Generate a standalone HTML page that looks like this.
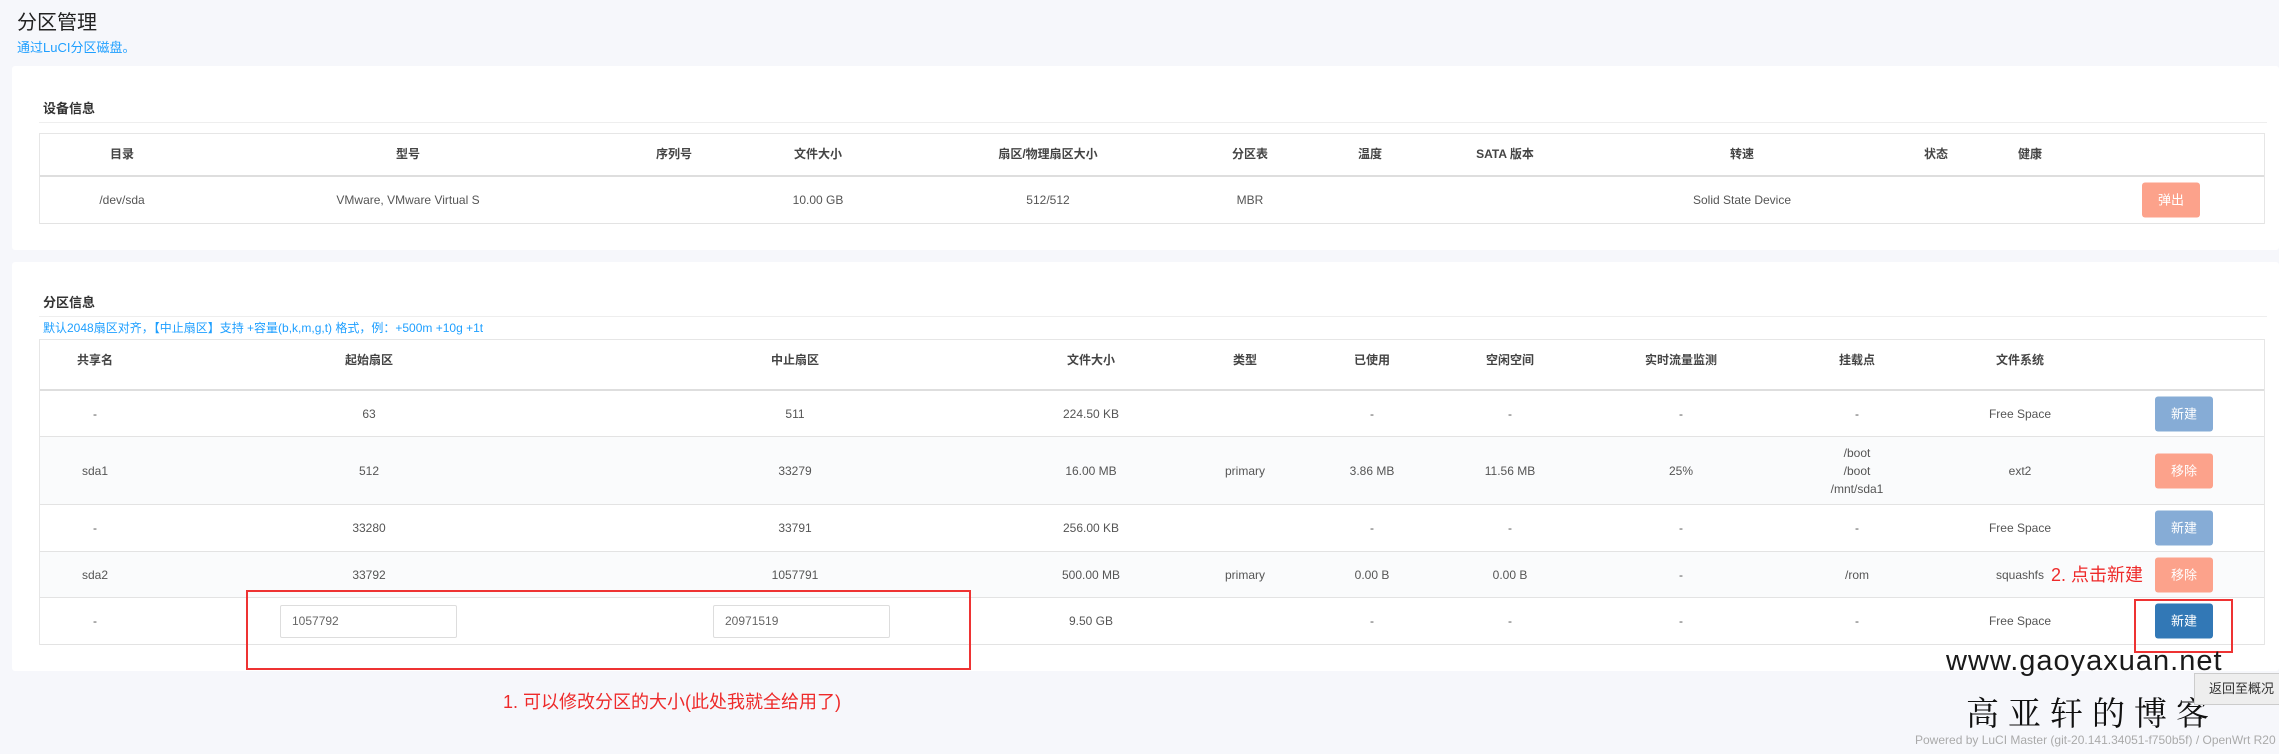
<!DOCTYPE html>
<html><head><meta charset="utf-8">
<style>
*{box-sizing:border-box;margin:0;padding:0}
body{width:2279px;height:754px;overflow:hidden;background:#f6f7fb;font-family:"Liberation Sans","Noto Sans CJK SC",sans-serif;position:relative;color:#555}
.abs{position:absolute;white-space:nowrap}
.card{position:absolute;background:#fff;left:12px;width:2267px;border-radius:3px}
.tbl{position:absolute;left:39px;width:2226px;border:1px solid #e6e6e6;border-bottom:none}
.row{position:relative;border-bottom:1px solid #e3e3e3}
.row.h{border-bottom:2px solid #dedede}
.row.alt{background:#fafbfc}
.c{position:absolute;top:50%;transform:translate(-50%,-50%);font-size:12px;white-space:nowrap;text-align:center;line-height:18px}
.h .c{font-weight:bold;color:#444;top:20px;font-size:12px}
.btn{position:absolute;width:58px;height:35px;border-radius:3px;color:#fff;font-size:13px;text-align:center;line-height:35px;transform:translate(-50%,-50%);top:50%}
.bb{background:#86acd6}.bs{background:#fca28b}.bd{background:#3278b6}
.inp{position:absolute;height:33px;width:177px;border:1px solid #ddd;font-size:12px;color:#666;padding-left:11px;line-height:31px;top:7px;border-radius:2px}
.red{position:absolute;border:2px solid #ee3333}
</style></head><body>
<div class="abs" style="left:17px;top:6px;font-size:20px;color:#222">分区管理</div>
<div class="abs" style="left:17px;top:37px;font-size:13px;color:#1e9fff">通过LuCI分区磁盘。</div>

<div class="card" style="top:66px;height:184px">
 <div class="abs" style="left:31px;top:32px;font-size:13px;font-weight:bold;color:#333">设备信息</div>
 <div class="abs" style="left:27px;top:56px;width:2228px;height:1px;background:#eee"></div>
</div>
<div class="tbl" style="top:133px">
 <div class="row h" style="height:43px">
  <div class="c" style="left:82px">目录</div><div class="c" style="left:368px">型号</div><div class="c" style="left:634px">序列号</div><div class="c" style="left:778px">文件大小</div><div class="c" style="left:1008px">扇区/物理扇区大小</div><div class="c" style="left:1210px">分区表</div><div class="c" style="left:1330px">温度</div><div class="c" style="left:1465px">SATA 版本</div><div class="c" style="left:1702px">转速</div><div class="c" style="left:1896px">状态</div><div class="c" style="left:1990px">健康</div>
 </div>
 <div class="row" style="height:47px">
  <div class="c" style="left:82px">/dev/sda</div><div class="c" style="left:368px">VMware, VMware Virtual S</div><div class="c" style="left:778px">10.00 GB</div><div class="c" style="left:1008px">512/512</div><div class="c" style="left:1210px">MBR</div><div class="c" style="left:1702px">Solid State Device</div>
  <div class="btn bs" style="left:2131px">弹出</div>
 </div>
</div>

<div class="card" style="top:262px;height:409px">
 <div class="abs" style="left:31px;top:30px;font-size:13px;font-weight:bold;color:#333">分区信息</div>
 <div class="abs" style="left:27px;top:54px;width:2228px;height:1px;background:#eee"></div>
 <div class="abs" style="left:31px;top:57px;font-size:12px;color:#1e9fff">默认2048扇区对齐，【中止扇区】支持 +容量(b,k,m,g,t) 格式，例：+500m +10g +1t</div>
</div>
<div class="tbl" style="top:339px">
 <div class="row h" style="height:51px">
  <div class="c" style="left:55px">共享名</div><div class="c" style="left:329px">起始扇区</div><div class="c" style="left:755px">中止扇区</div><div class="c" style="left:1051px">文件大小</div><div class="c" style="left:1205px">类型</div><div class="c" style="left:1332px">已使用</div><div class="c" style="left:1470px">空闲空间</div><div class="c" style="left:1641px">实时流量监测</div><div class="c" style="left:1817px">挂载点</div><div class="c" style="left:1980px">文件系统</div>
 </div>
 <div class="row" style="height:46px">
  <div class="c" style="left:55px">-</div><div class="c" style="left:329px">63</div><div class="c" style="left:755px">511</div><div class="c" style="left:1051px">224.50 KB</div><div class="c" style="left:1332px">-</div><div class="c" style="left:1470px">-</div><div class="c" style="left:1641px">-</div><div class="c" style="left:1817px">-</div><div class="c" style="left:1980px">Free Space</div><div class="btn bb" style="left:2144px">新建</div>
 </div>
 <div class="row alt" style="height:68px">
  <div class="c" style="left:55px">sda1</div><div class="c" style="left:329px">512</div><div class="c" style="left:755px">33279</div><div class="c" style="left:1051px">16.00 MB</div><div class="c" style="left:1205px">primary</div><div class="c" style="left:1332px">3.86 MB</div><div class="c" style="left:1470px">11.56 MB</div><div class="c" style="left:1641px">25%</div><div class="c" style="left:1817px">/boot<br>/boot<br>/mnt/sda1</div><div class="c" style="left:1980px">ext2</div><div class="btn bs" style="left:2144px">移除</div>
 </div>
 <div class="row" style="height:47px">
  <div class="c" style="left:55px">-</div><div class="c" style="left:329px">33280</div><div class="c" style="left:755px">33791</div><div class="c" style="left:1051px">256.00 KB</div><div class="c" style="left:1332px">-</div><div class="c" style="left:1470px">-</div><div class="c" style="left:1641px">-</div><div class="c" style="left:1817px">-</div><div class="c" style="left:1980px">Free Space</div><div class="btn bb" style="left:2144px">新建</div>
 </div>
 <div class="row alt" style="height:46px">
  <div class="c" style="left:55px">sda2</div><div class="c" style="left:329px">33792</div><div class="c" style="left:755px">1057791</div><div class="c" style="left:1051px">500.00 MB</div><div class="c" style="left:1205px">primary</div><div class="c" style="left:1332px">0.00 B</div><div class="c" style="left:1470px">0.00 B</div><div class="c" style="left:1641px">-</div><div class="c" style="left:1817px">/rom</div><div class="c" style="left:1980px">squashfs</div><div class="btn bs" style="left:2144px">移除</div>
 </div>
 <div class="row" style="height:47px">
  <div class="c" style="left:55px">-</div><div class="inp" style="left:240px">1057792</div><div class="inp" style="left:673px">20971519</div><div class="c" style="left:1051px">9.50 GB</div><div class="c" style="left:1332px">-</div><div class="c" style="left:1470px">-</div><div class="c" style="left:1641px">-</div><div class="c" style="left:1817px">-</div><div class="c" style="left:1980px">Free Space</div><div class="btn bd" style="left:2144px">新建</div>
 </div>
</div>

<div class="red" style="left:246px;top:590px;width:725px;height:80px"></div>
<div class="red" style="left:2134px;top:599px;width:99px;height:54px"></div>
<div class="abs" style="left:2051px;top:561px;font-size:18px;color:#ee2a2a">2. 点击新建</div>
<div class="abs" style="left:503px;top:688px;font-size:18px;color:#ee2a2a">1. 可以修改分区的大小(此处我就全给用了)</div>

<div class="abs" style="left:1946px;top:645px;font-size:29px;color:#1a1a1a;font-family:'Liberation Sans',sans-serif;letter-spacing:1px">www.gaoyaxuan.net</div>
<div class="abs" style="left:1966px;top:692px;font-size:33px;line-height:40px;color:#111;font-family:'Noto Serif CJK SC',serif;letter-spacing:9px">高亚轩的博客</div>
<div class="abs" style="left:2194px;top:673px;width:90px;height:32px;background:#eee;border:1px solid #ccc;font-size:13px;color:#333;line-height:30px;padding-left:14px">返回至概况</div>
<div class="abs" style="left:1915px;top:733px;font-size:12px;color:#aaa">Powered by LuCI Master (git-20.141.34051-f750b5f) / OpenWrt R20</div>
</body></html>
